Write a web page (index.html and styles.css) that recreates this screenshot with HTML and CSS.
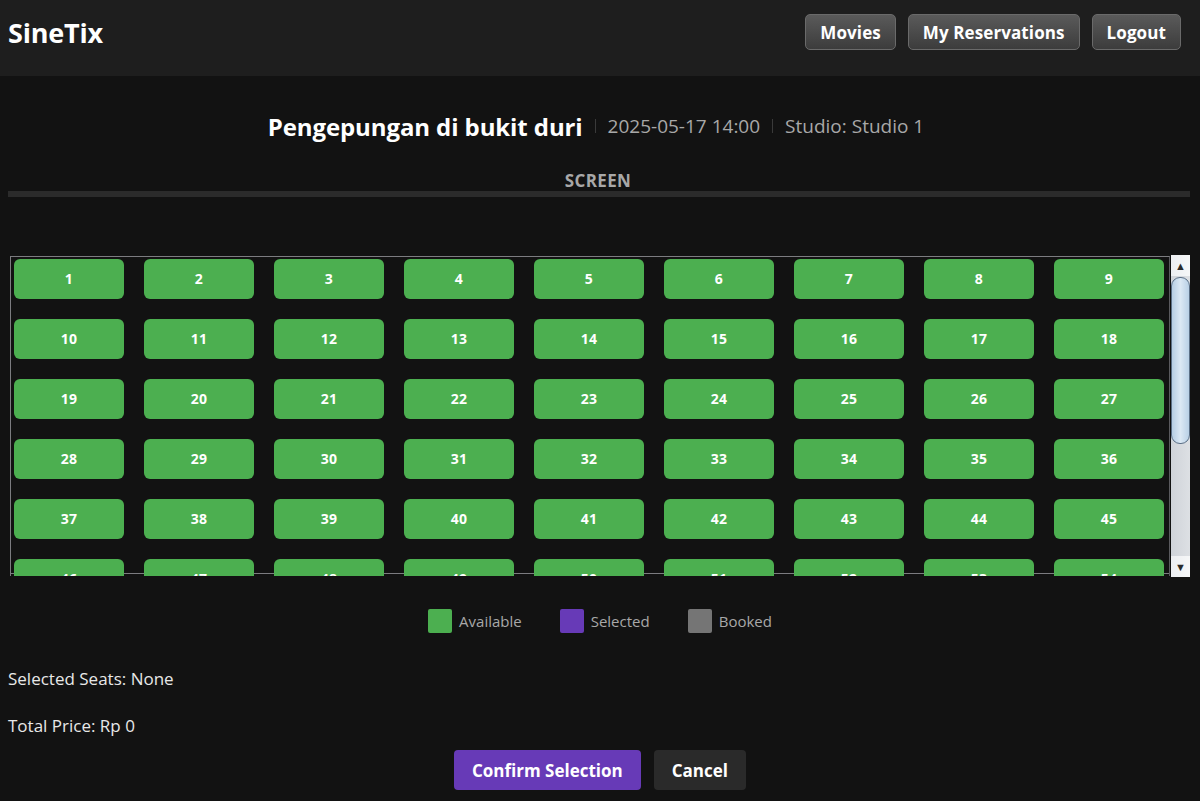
FILE: index.html
```html
<!DOCTYPE html>
<html lang="en">
<head>
<meta charset="utf-8">
<title>SineTix</title>
<link rel="stylesheet" href="styles.css">
</head>
<body>
<header class="topbar">
  <div class="brand">SineTix</div>
  <nav class="nav">
    <button class="nav-btn">Movies</button>
    <button class="nav-btn">My Reservations</button>
    <button class="nav-btn">Logout</button>
  </nav>
</header>
<main class="main">
  <div class="info">
    <span class="movie">Pengepungan di bukit duri</span>
    <span class="sep"></span>
    <span class="meta">2025-05-17 14:00</span>
    <span class="sep"></span>
    <span class="meta">Studio: Studio 1</span>
  </div>
  <div class="screen-label">SCREEN</div>
  <div class="screen-bar"></div>

  <div class="seat-area">
    <div class="viewport">
      <div class="seats" id="seats"></div>
    </div>
    <div class="scrollbar">
      <div class="sb-btn">&#9650;</div>
      <div class="sb-track">
        <div class="sb-thumb"></div>
      </div>
      <div class="sb-btn">&#9660;</div>
    </div>
  </div>

  <div class="legend">
    <div class="legend-item"><span class="swatch available"></span><span>Available</span></div>
    <div class="legend-item"><span class="swatch selected"></span><span>Selected</span></div>
    <div class="legend-item"><span class="swatch booked"></span><span>Booked</span></div>
  </div>

  <div class="summary">Selected Seats: None</div>
  <div class="summary price">Total Price: Rp 0</div>

  <div class="actions">
    <button class="btn confirm">Confirm Selection</button>
    <button class="btn cancel">Cancel</button>
  </div>
</main>
<script src="app.js"></script>
</body>
</html>
```

FILE: app.js
```js
var seats = document.getElementById('seats');
for (var i = 1; i <= 63; i++) {
  var b = document.createElement('button');
  b.className = 'seat';
  b.textContent = i;
  seats.appendChild(b);
}
```

FILE: styles.css
```css
* { box-sizing: border-box; }
html, body { margin: 0; padding: 0; }
body {
  background: #121212;
  font-family: "Open Sans", "Noto Sans", sans-serif;
  color: #fff;
  width: 1200px;
  height: 801px;
  overflow: hidden;
}
button { font-family: inherit; cursor: pointer; }

.topbar {
  height: 76px;
  background: #1e1e1e;
  display: flex;
  justify-content: space-between;
  align-items: flex-start;
  padding: 14px 19px 0 8px;
}
.brand {
  font-size: 27px;
  font-weight: 700;
  line-height: 38px;
  margin-top: 0;
  letter-spacing: -0.2px;
}
.nav { display: flex; gap: 12px; }
.nav-btn {
  height: 36px;
  padding: 0 14px;
  border: 1px solid #6a6a6a;
  border-radius: 5px;
  background: linear-gradient(#5a5a5a, #3c3c3c);
  color: #fff;
  font-size: 17px;
  font-weight: 700;
  letter-spacing: 0.1px;
}

.main { padding: 0 8px; }

.info {
  margin-top: 35px;
  height: 30px;
  display: flex;
  justify-content: center;
  align-items: center;
  gap: 12px;
  padding-right: 8px;
}
.movie { font-size: 24px; font-weight: 700; letter-spacing: -0.1px; }
.meta { font-size: 19px; color: #a8a8a8; }
.sep { width: 1px; height: 14px; background: #3a3a3a; }

.screen-label {
  margin-top: 30px;
  text-align: center;
  font-size: 17px;
  font-weight: 700;
  color: #a8a8a8;
  line-height: 20px;
  letter-spacing: 0.4px;
  padding-right: 4px;
}
.screen-bar { height: 6px; background: #2b2b2b; margin-right: 2px; }

.seat-area {
  margin-top: 58px;
  margin-left: 2px;
  display: flex;
  align-items: flex-start;
}
.viewport {
  width: 1160px;
  height: 320px;
  margin-top: 1px;
  border: 1px solid #7c7c80;
  border-right-color: #5a5a5e;
  border-bottom: 0;
  background: linear-gradient(to top, transparent 2px, #7c7c80 2px, #7c7c80 3px, transparent 3px);
  overflow: hidden;
  padding: 2px 0 0 3px;
}
.seats {
  display: grid;
  grid-template-columns: repeat(9, 110px);
  grid-auto-rows: 40px;
  column-gap: 20px;
  row-gap: 20px;
}
.seat {
  border: 0;
  border-radius: 6px;
  background: #4caf50;
  color: #fff;
  font-size: 14px;
  font-weight: 700;
  letter-spacing: 0.3px;
  padding: 0 0 2px;
}

.scrollbar {
  width: 19px;
  height: 322px;
  margin-left: 1px;
  display: flex;
  flex-direction: column;
  background: #d4d7dc;
}
.sb-btn {
  height: 21px;
  background: linear-gradient(90deg, #eceef1, #f6f7f8);
  color: #2a2a2a;
  font-size: 11px;
  line-height: 21px;
  text-align: center;
}
.sb-track {
  flex: 1;
  background: linear-gradient(90deg, #cfd3d9, #dde0e4);
  padding-top: 1px;
}
.sb-thumb {
  height: 167px;
  border: 1px solid #5b6f86;
  border-radius: 9px;
  background: linear-gradient(90deg, #b6cde3, #dbe8f4 50%, #b9d0e6);
}

.legend {
  margin-top: 32px;
  display: flex;
  justify-content: center;
  gap: 38px;
}
.legend-item {
  display: flex;
  align-items: center;
  gap: 7px;
  font-size: 15px;
  color: #a8a8a8;
}
.swatch { width: 24px; height: 24px; border-radius: 2px; }
.swatch.available { background: #4caf50; }
.swatch.selected { background: #673ab7; }
.swatch.booked { background: #757575; }

.summary {
  margin-top: 36px;
  font-size: 17px;
  line-height: 20px;
  color: #e8e8e8;
}
.summary.price { margin-top: 27px; }

.actions {
  margin-top: 14px;
  display: flex;
  justify-content: center;
  gap: 13px;
}
.btn {
  height: 40px;
  border: 0;
  border-radius: 4px;
  color: #fff;
  font-size: 17px;
  font-weight: 700;
  padding: 0 18px;
}
.btn.confirm { background: #673ab7; }
.btn.cancel { background: #2a2a2a; }
```
